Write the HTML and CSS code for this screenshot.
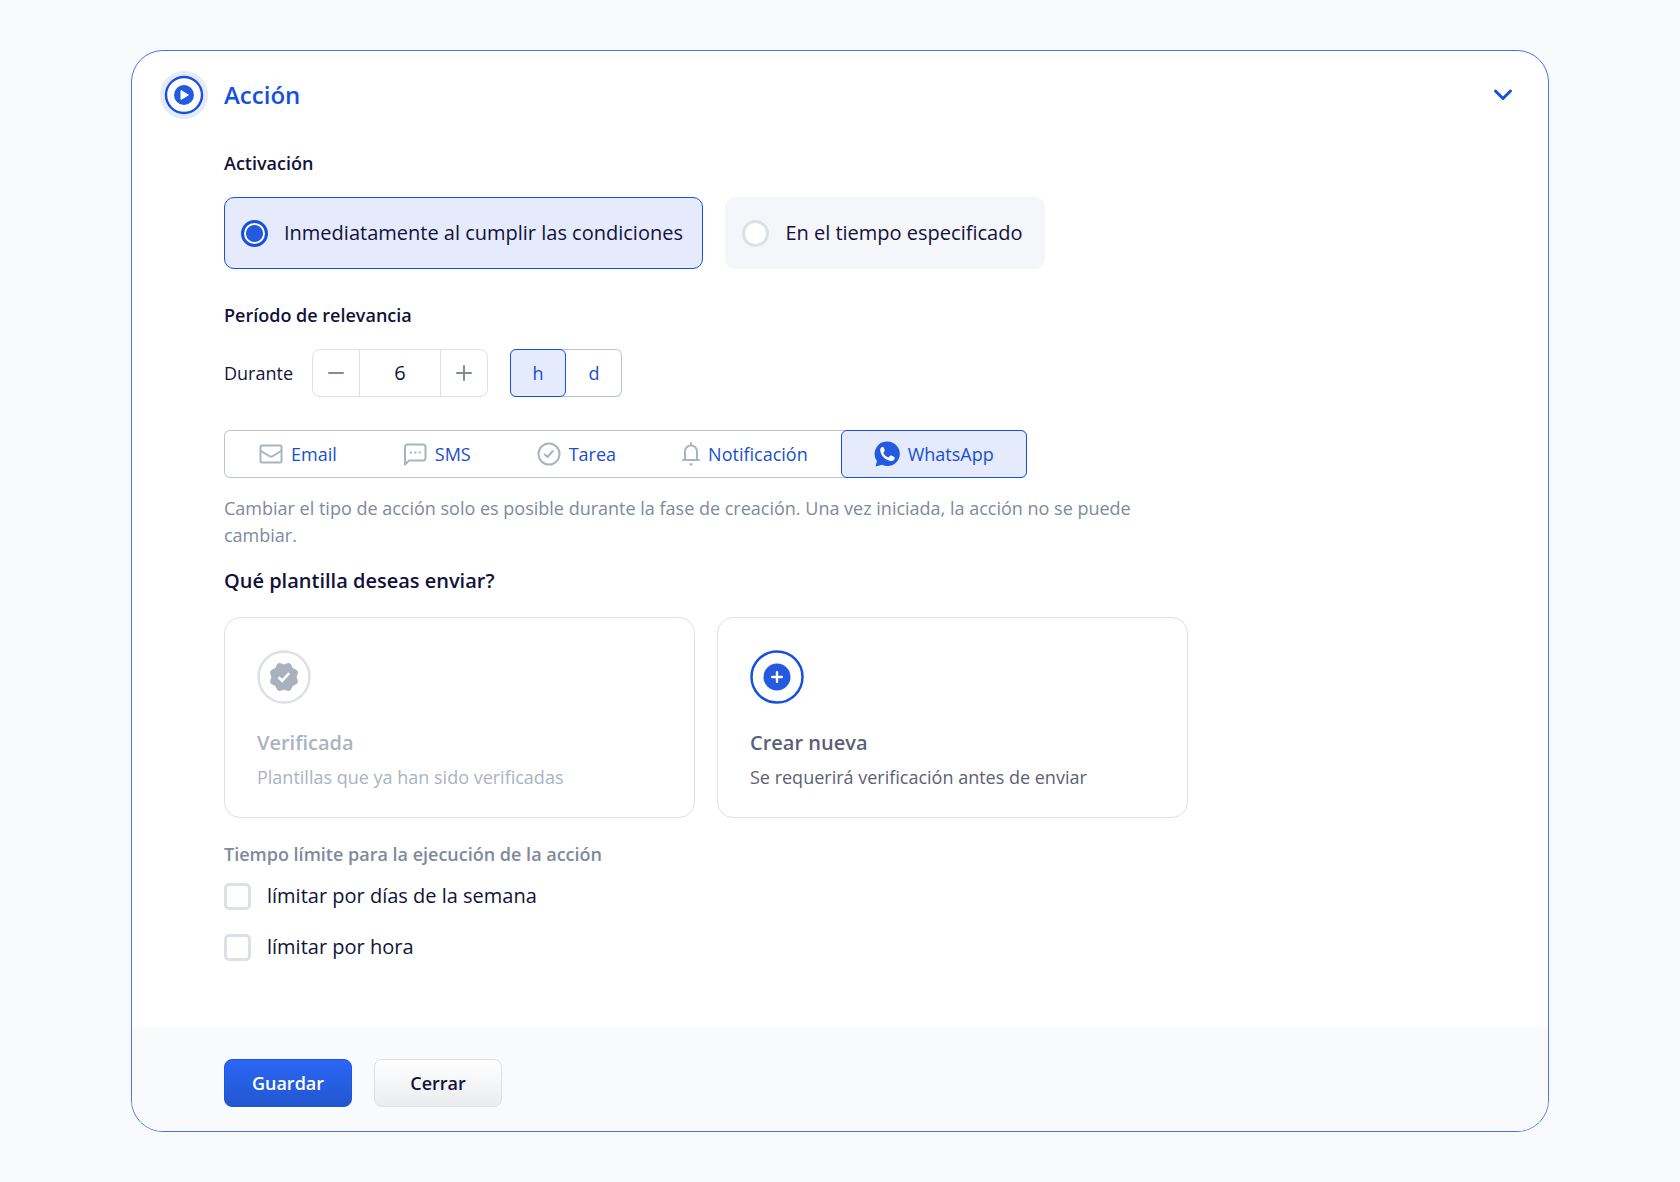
FILE: index.html
```html
<!DOCTYPE html>
<html lang="es">
<head>
<meta charset="utf-8">
<meta name="viewport" content="width=device-width, initial-scale=1">
<title>Acción</title>
<link rel="stylesheet" href="styles.css">
</head>
<body>
<form class="panel">
  <header class="panel-header">
    <svg class="panel-icon" viewBox="0 0 48 48" aria-hidden="true">
      <circle cx="24" cy="24" r="24" fill="#e5eafd"/>
      <circle cx="24" cy="24" r="18" fill="#fff" stroke="#1650e0" stroke-width="2.4"/>
      <circle cx="24" cy="24" r="10" fill="#235ae0"/>
      <path d="M21 19.6v8.8l7.4-4.4z" fill="#fff" stroke="#fff" stroke-width="1" stroke-linejoin="round"/>
    </svg>
    <h1 class="panel-title">Acción</h1>
    <button type="button" class="collapse" aria-label="Contraer">
      <svg width="20" height="14" viewBox="0 0 20 14" fill="none" stroke="#1650e0" stroke-width="3" stroke-linecap="round" stroke-linejoin="round"><path d="M2.500 3l7.500 7.500L17.500 3"/></svg>
    </button>
  </header>

  <div class="panel-body">
    <h2 class="label">Activación</h2>
    <div class="options">
      <label class="option"><input class="radio" type="radio" name="activation" checked><span>Inmediatamente al cumplir las condiciones</span></label>
      <label class="option"><input class="radio" type="radio" name="activation"><span>En el tiempo especificado</span></label>
    </div>

    <h2 class="label">Período de relevancia</h2>
    <div class="period">
      <label class="period-label" for="duration">Durante</label>
      <div class="stepper">
        <button type="button" class="step" aria-label="Menos"><svg width="18" height="18" viewBox="0 0 18 18" stroke="#808a9b" stroke-width="2" stroke-linecap="round"><path d="M2 9h14"/></svg></button>
        <input class="step-value" id="duration" type="text" value="6">
        <button type="button" class="step" aria-label="Más"><svg width="18" height="18" viewBox="0 0 18 18" stroke="#808a9b" stroke-width="2" stroke-linecap="round"><path d="M2 9h14M9 2v14"/></svg></button>
      </div>
      <div class="segments">
        <button type="button" class="segment unit active" aria-pressed="true">h</button>
        <button type="button" class="segment unit" aria-pressed="false">d</button>
      </div>
    </div>

    <div class="segments channels">
      <button type="button" class="segment channel"><svg class="icon" viewBox="0 0 24 24"><rect x="1.500" y="3.500" width="21" height="17" rx="1.500"/><path d="M2 9l8 5a3.800 3.800 0 0 0 4 0L22 9"/></svg>Email</button>
      <button type="button" class="segment channel"><svg class="icon" viewBox="0 0 24 24"><path d="M2 22.500V5a2.500 2.500 0 0 1 2.500-2.500h15.500A2.500 2.500 0 0 1 22.500 5v11a2.500 2.500 0 0 1-2.500 2.500H6z"/><path d="M7 10.500h2M11.300 10.500h2M15.600 10.500h2" stroke-linecap="butt"/></svg>SMS</button>
      <button type="button" class="segment channel"><svg class="icon" viewBox="0 0 24 24"><circle cx="12" cy="12" r="10.500"/><path d="M7.800 12.500l2.700 2.500 5.300-6"/></svg>Tarea</button>
      <button type="button" class="segment channel"><svg class="icon bell" viewBox="3 0 18 24"><path d="M12 1v2M4 18h16M6 18V9.500a6 6 0 0 1 12 0V18"/><path d="M9.600 21.500h4.800L12 24z" fill="#abb3bf" stroke="none"/></svg>Notificación</button>
      <button type="button" class="segment channel active"><svg class="icon whatsapp" viewBox="0 0 26 26"><path d="M13.500 0.500a12.300 12.300 0 1 1-5.500 23.300L1.500 25.500l1.500-5.500A12.300 12.300 0 0 1 13.500 .5z" fill="#235ae0" stroke="none"/><path d="M8.700 6c-1.500.1-2.700 1.700-2.500 3.600.5 5 5.300 10 10.800 10.300 2 .1 3.600-1 3.700-2.600.1-.8-.2-1.200-.8-1.500l-2.500-1.200c-.6-.3-1.100-.2-1.500.3l-1 1.200c-.3.300-.6.4-1 .2-2-.9-3.400-2.300-4.400-4.100-.2-.4-.1-.7.200-1l.8-.9c.3-.4.4-.8.200-1.200L9.700 6.600c-.2-.5-.5-.6-1-.6z" fill="#fff" stroke="none"/></svg>WhatsApp</button>
    </div>
    <p class="hint">Cambiar el tipo de acción solo es posible durante la fase de creación. Una vez iniciada, la acción no se puede cambiar.</p>

    <h2 class="question">Qué plantilla deseas enviar?</h2>
    <div class="templates">
      <button type="button" class="template" disabled>
        <svg class="template-icon" viewBox="0 0 54 54" aria-hidden="true"><circle cx="27" cy="27" r="25.500" fill="none" stroke="#dde1e7" stroke-width="2.500"/><g fill="#a9b1be" transform="rotate(22.500 27 27)"><rect x="15.500" y="15.500" width="23" height="23" rx="4"/><rect x="15.500" y="15.500" width="23" height="23" rx="4" transform="rotate(45 27 27)"/></g><path d="M21.500 27.200l3.700 3.500 7-7.500" fill="none" stroke="#fff" stroke-width="2.600"/></svg>
        <span class="template-title">Verificada</span>
        <span class="template-text">Plantillas que ya han sido verificadas</span>
      </button>
      <button type="button" class="template">
        <svg class="template-icon" viewBox="0 0 54 54" aria-hidden="true"><circle cx="27" cy="27" r="25.500" fill="none" stroke="#1650e0" stroke-width="2.500"/><circle cx="27" cy="27" r="13.500" fill="#235ae0"/><path d="M27 22.200v9.600M22.200 27h9.600" stroke="#fff" stroke-width="2.400" stroke-linecap="round"/></svg>
        <span class="template-title">Crear nueva</span>
        <span class="template-text">Se requerirá verificación antes de enviar</span>
      </button>
    </div>

    <fieldset class="limits">
      <legend class="limits-title">Tiempo límite para la ejecución de la acción</legend>
      <label class="limit"><input class="check" type="checkbox"><span>límitar por días de la semana</span></label>
      <label class="limit"><input class="check" type="checkbox"><span>límitar por hora</span></label>
    </fieldset>
  </div>

  <footer class="panel-footer">
    <button type="submit" class="button primary">Guardar</button>
    <button type="button" class="button">Cerrar</button>
  </footer>
</form>
</body>
</html>
```
FILE: styles.css
```css
*, *::before, *::after { box-sizing: border-box; }

body {
  margin: 0;
  padding: 50px 131px;
  background: #f9fafc;
  color: #12123a;
  font: 18px/28px "Open Sans", "Noto Sans", sans-serif;
}

h1, h2, p { margin: 0; }

button, input { font: inherit; color: inherit; }
button { cursor: pointer; }
svg { display: block; flex: none; }

.panel {
  background: #fff;
  border: 1px solid #4677e4;
  border-radius: 32px;
  overflow: hidden;
}

.panel-header {
  display: flex;
  align-items: center;
  padding: 20px 35px 0 28px;
}
.panel-icon { width: 48px; height: 48px; }
.panel-title {
  flex: 1;
  padding-left: 16px;
  font-size: 24px;
  line-height: 32px;
  font-weight: 600;
  color: #1650e0;
}
.collapse { padding: 0; border: 0; background: none; }

.panel-body { padding: 30px 92px 66px; }

.label { font-size: 18px; line-height: 28px; font-weight: 600; }

.options {
  display: grid;
  grid-template-columns: 3fr 2fr;
  gap: 22px;
  max-width: 821px;
  margin: 20px 0 32px;
}
.option {
  display: flex;
  align-items: center;
  gap: 16px;
  height: 72px;
  padding: 0 16px;
  border: 1px solid #f4f6fa;
  border-radius: 10px;
  background: #f4f6fa;
  font-size: 20px;
}
.option:has(:checked) { border-color: #1650e0; background: #e5eafd; }

.radio, .check {
  appearance: none;
  flex: none;
  width: 27px;
  height: 27px;
  margin: 0;
  border: 3px solid #dde1e7;
  background: #fff;
}
.radio { border-radius: 50%; }
.radio:checked {
  border-color: #1650e0;
  background: radial-gradient(circle, #235ae0 8px, #fff 9px);
}
.check { border-radius: 5px; }

.period {
  display: flex;
  align-items: center;
  gap: 22px;
  margin: 20px 0 33px;
}
.period-label { width: 66px; white-space: nowrap; }
.stepper {
  display: flex;
  width: 176px;
  height: 48px;
  border: 1px solid #dde1e7;
  border-radius: 8px;
}
.step {
  display: grid;
  place-items: center;
  width: 46px;
  padding: 0;
  border: 0;
  background: none;
}
.step-value {
  flex: 1;
  min-width: 0;
  padding: 0;
  border: solid #dde1e7;
  border-width: 0 1px;
  background: none;
  text-align: center;
  font-size: 20px;
}

.segments {
  display: flex;
  width: fit-content;
  height: 48px;
  border-radius: 6px;
  box-shadow: inset 0 0 0 1px #bcc4d0;
}
.channels { padding-left: 2px; }
.segment {
  display: flex;
  align-items: center;
  justify-content: center;
  gap: 8px;
  padding: 0;
  border: 1px solid transparent;
  border-radius: 6px;
  background: none;
  color: #184fd0;
}
.segment.active { border-color: #1650e0; background: #e5eafd; }
.unit { width: 56px; }
.channel { padding: 0 32px; }

.icon {
  width: 24px;
  height: 24px;
  fill: none;
  stroke: #abb3bf;
  stroke-width: 2;
  stroke-linecap: round;
  stroke-linejoin: round;
}
.bell { width: 18px; }
.whatsapp { width: 26px; height: 26px; }

.hint {
  max-width: 912px;
  margin-top: 17px;
  line-height: 27px;
  color: #808a9b;
}

.question {
  margin: 18px 0 22px;
  font-size: 20px;
  line-height: 28px;
  font-weight: 600;
}

.templates {
  display: grid;
  grid-template-columns: 1fr 1fr;
  gap: 22px;
  max-width: 964px;
}
.template {
  display: flex;
  flex-direction: column;
  align-items: flex-start;
  padding: 32px 32px 28px;
  border: 1px solid #dde1e7;
  border-radius: 16px;
  background: #fff;
  color: #5c5f75;
  text-align: left;
}
.template:disabled { color: #abb3bf; cursor: default; }
.template-icon { width: 54px; height: 54px; margin-bottom: 25px; }
.template-title { font-size: 20px; line-height: 28px; font-weight: 600; }
.template-text { margin-top: 8px; line-height: 24px; }

.limits { margin: 22px 0 0; padding: 0; border: 0; }
.limits-title { padding: 0; font-weight: 600; color: #808a9b; }
.limit {
  display: flex;
  align-items: center;
  gap: 16px;
  width: fit-content;
  margin-top: 14px;
  font-size: 20px;
}
.limit + .limit { margin-top: 23px; }

.panel-footer {
  display: flex;
  gap: 22px;
  padding: 32px 92px 24px;
  background: #f9fafc;
}
.button {
  width: 128px;
  height: 48px;
  padding: 0;
  border: 1px solid #dddfe5;
  border-radius: 8px;
  background: linear-gradient(#fff, #ebecef);
  font-weight: 600;
}
.button.primary {
  border-color: #1f55d8;
  background: linear-gradient(#2b66f6, #2257cf);
  color: #fff;
}
```
